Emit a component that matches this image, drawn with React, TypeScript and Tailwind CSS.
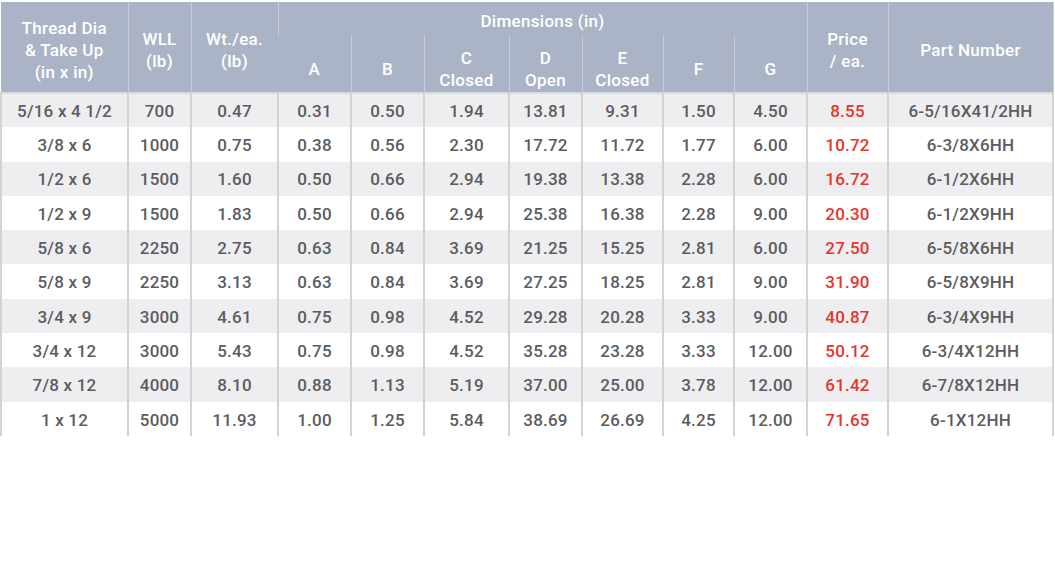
import React from 'react';

type Row = {
  size: string;
  wll: string;
  wt: string;
  a: string;
  b: string;
  c: string;
  d: string;
  e: string;
  f: string;
  g: string;
  price: string;
  part: string;
};

const rows: Row[] = [
  { size: '5/16 x 4 1/2', wll: '700', wt: '0.47', a: '0.31', b: '0.50', c: '1.94', d: '13.81', e: '9.31', f: '1.50', g: '4.50', price: '8.55', part: '6-5/16X41/2HH' },
  { size: '3/8 x 6', wll: '1000', wt: '0.75', a: '0.38', b: '0.56', c: '2.30', d: '17.72', e: '11.72', f: '1.77', g: '6.00', price: '10.72', part: '6-3/8X6HH' },
  { size: '1/2 x 6', wll: '1500', wt: '1.60', a: '0.50', b: '0.66', c: '2.94', d: '19.38', e: '13.38', f: '2.28', g: '6.00', price: '16.72', part: '6-1/2X6HH' },
  { size: '1/2 x 9', wll: '1500', wt: '1.83', a: '0.50', b: '0.66', c: '2.94', d: '25.38', e: '16.38', f: '2.28', g: '9.00', price: '20.30', part: '6-1/2X9HH' },
  { size: '5/8 x 6', wll: '2250', wt: '2.75', a: '0.63', b: '0.84', c: '3.69', d: '21.25', e: '15.25', f: '2.81', g: '6.00', price: '27.50', part: '6-5/8X6HH' },
  { size: '5/8 x 9', wll: '2250', wt: '3.13', a: '0.63', b: '0.84', c: '3.69', d: '27.25', e: '18.25', f: '2.81', g: '9.00', price: '31.90', part: '6-5/8X9HH' },
  { size: '3/4 x 9', wll: '3000', wt: '4.61', a: '0.75', b: '0.98', c: '4.52', d: '29.28', e: '20.28', f: '3.33', g: '9.00', price: '40.87', part: '6-3/4X9HH' },
  { size: '3/4 x 12', wll: '3000', wt: '5.43', a: '0.75', b: '0.98', c: '4.52', d: '35.28', e: '23.28', f: '3.33', g: '12.00', price: '50.12', part: '6-3/4X12HH' },
  { size: '7/8 x 12', wll: '4000', wt: '8.10', a: '0.88', b: '1.13', c: '5.19', d: '37.00', e: '25.00', f: '3.78', g: '12.00', price: '61.42', part: '6-7/8X12HH' },
  { size: '1 x 12', wll: '5000', wt: '11.93', a: '1.00', b: '1.25', c: '5.84', d: '38.69', e: '26.69', f: '4.25', g: '12.00', price: '71.65', part: '6-1X12HH' },
];

// column widths, left to right
const widths = [127, 63, 87, 73, 73, 85, 73, 81, 71, 73, 81, 165];

const th = 'border-l border-[#c9cfda] first:border-l-0 px-1 align-middle text-center font-medium leading-[22px] tracking-[0.3px]';
const tall = `${th} pt-[6px]`;
const sub = `${th} pt-[10px]`;
const td = 'h-[34.3px] border-l-2 border-[#d3d3d6] px-1 pt-[3px] text-center tracking-[0.2px]';

export default function App() {
  return (
    <div className="min-h-[568px] w-[1055px] bg-white pt-[2px] text-[17px] text-[#5b5c5f]" style={{ fontFamily: 'Roboto, "Liberation Sans", sans-serif' }}>
      <table className="w-[1051px] table-fixed border-collapse">
        <colgroup>
          {widths.map((w, i) => (
            <col key={i} style={{ width: w }} />
          ))}
        </colgroup>
        <thead className="bg-[#abb4c6] text-white">
          <tr className="h-[34px]">
            <th rowSpan={2} className={tall}>Thread Dia<br />&amp; Take Up<br />(in x in)</th>
            <th rowSpan={2} className={tall}>WLL<br />(lb)</th>
            <th rowSpan={2} className={tall}>Wt./ea.<br />(lb)</th>
            <th colSpan={7} className={`${th} pt-[4px]`}>Dimensions (in)</th>
            <th rowSpan={2} className={tall}>Price<br />/ ea.</th>
            <th rowSpan={2} className={`${tall} border-r border-r-[#c9cfda]`}>Part Number</th>
          </tr>
          <tr className="h-[57px] border-b-2 border-[#d6dae2]">
            <th className={sub}>A</th>
            <th className={sub}>B</th>
            <th className={sub}>C<br />Closed</th>
            <th className={sub}>D<br />Open</th>
            <th className={sub}>E<br />Closed</th>
            <th className={sub}>F</th>
            <th className={sub}>G</th>
          </tr>
        </thead>
        <tbody className="font-medium">
          {rows.map((r, i) => (
            <tr key={r.part} className={i % 2 === 0 ? 'bg-[#eeeef1]' : 'bg-white'}>
              <td className={td}>{r.size}</td>
              <td className={td}>{r.wll}</td>
              <td className={td}>{r.wt}</td>
              <td className={td}>{r.a}</td>
              <td className={td}>{r.b}</td>
              <td className={td}>{r.c}</td>
              <td className={td}>{r.d}</td>
              <td className={td}>{r.e}</td>
              <td className={td}>{r.f}</td>
              <td className={td}>{r.g}</td>
              <td className={`${td} text-[#e5352c]`}>{r.price}</td>
              <td className={`${td} border-r-2`}>{r.part}</td>
            </tr>
          ))}
        </tbody>
      </table>
    </div>
  );
}
